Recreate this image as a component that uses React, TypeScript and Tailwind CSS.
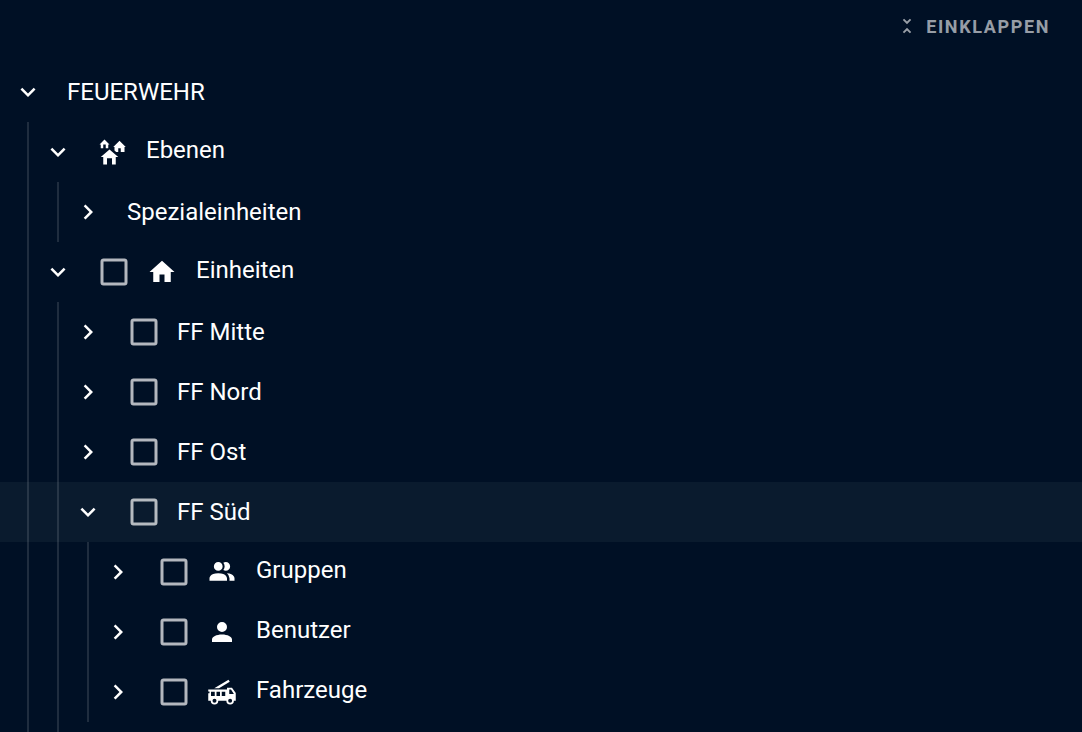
import { useState } from "react";

type IconName = "homeGroup" | "home" | "accounts" | "account" | "fireTruck";

type TreeNode = {
  id: string;
  label: string;
  icon?: IconName;
  selectable?: boolean;
  children?: TreeNode[];
};

const paths: Record<IconName, string> = {
  homeGroup:
    "M17,16H15V22H12V17H8V22H5V16H3L10,10L17,16M6,2L10,6H9V9H7V6H5V9H3V6H2L6,2M18,3L23,8H22V12H19V9H17V12H15.34L14,10.87V8H13L18,3Z",
  home: "M10,20V14H14V20H19V12H22L12,3L2,12H5V20H10Z",
  accounts:
    "M16 17V19H2V17S2 13 9 13 16 17 16 17M12.5 7.5A3.5 3.5 0 1 0 9 11A3.5 3.5 0 0 0 12.5 7.5M15.94 13A5.32 5.32 0 0 1 18 17V19H22V17S22 13.37 15.94 13M15 4A3.39 3.39 0 0 0 13.07 4.59A5 5 0 0 1 13.07 10.41A3.39 3.39 0 0 0 15 11A3.5 3.5 0 0 0 15 4Z",
  account:
    "M12,4A4,4 0 0,1 16,8A4,4 0 0,1 12,12A4,4 0 0,1 8,8A4,4 0 0,1 12,4M12,14C16.42,14 20,15.79 20,18V20H4V18C4,15.79 7.58,14 12,14Z",
  fireTruck:
    "M5.8 9L17.2 2.1L18.2 3.8L9.6 9ZM1 10H16V8.5H20L23 12.7V19H21.5A3 3 0 0 1 15.5 19H9A3 3 0 0 1 3 19H1V13H2V11.5H1ZM3.2 11.7V15.1H6.2V11.7ZM7.6 11.7V15.1H10.4V11.7ZM11.8 11.7V15.1H14.6V11.7ZM17.8 9.9V13.5H21.5L19.2 9.9ZM6 17.4A1.6 1.6 0 1 0 6 20.6A1.6 1.6 0 1 0 6 17.4ZM18.5 17.4A1.6 1.6 0 1 0 18.5 20.6A1.6 1.6 0 1 0 18.5 17.4Z",
};

const tree: TreeNode[] = [
  {
    id: "feuerwehr",
    label: "FEUERWEHR",
    children: [
      {
        id: "ebenen",
        label: "Ebenen",
        icon: "homeGroup",
        children: [{ id: "spezial", label: "Spezialeinheiten", children: [] }],
      },
      {
        id: "einheiten",
        label: "Einheiten",
        icon: "home",
        selectable: true,
        children: [
          { id: "mitte", label: "FF Mitte", selectable: true, children: [] },
          { id: "nord", label: "FF Nord", selectable: true, children: [] },
          { id: "ost", label: "FF Ost", selectable: true, children: [] },
          {
            id: "sued",
            label: "FF Süd",
            selectable: true,
            children: [
              { id: "gruppen", label: "Gruppen", icon: "accounts", selectable: true, children: [] },
              { id: "benutzer", label: "Benutzer", icon: "account", selectable: true, children: [] },
              { id: "fahrzeuge", label: "Fahrzeuge", icon: "fireTruck", selectable: true, children: [] },
            ],
          },
        ],
      },
    ],
  },
];

function Guides({ count }: { count: number }) {
  return (
    <>
      {Array.from({ length: count }, (_, i) => (
        <span key={i} className="flex w-[30px] shrink-0 justify-center self-stretch">
          <span className="w-0.5 bg-white/12" />
        </span>
      ))}
    </>
  );
}

function Checkbox({ id }: { id: string }) {
  return (
    <span className="ml-[23px] grid size-9 shrink-0 text-white/70">
      <input
        id={id}
        type="checkbox"
        className="peer col-start-1 row-start-1 size-9 cursor-pointer appearance-none"
      />
      <svg
        viewBox="0 0 24 24"
        fill="currentColor"
        className="pointer-events-none col-start-1 row-start-1 size-9 peer-checked:hidden"
      >
        <path d="M19,3H5C3.89,3 3,3.89 3,5V19A2,2 0 0,0 5,21H19A2,2 0 0,0 21,19V5C21,3.89 20.1,3 19,3M19,5V19H5V5H19Z" />
      </svg>
      <svg
        viewBox="0 0 24 24"
        fill="currentColor"
        className="pointer-events-none col-start-1 row-start-1 hidden size-9 peer-checked:block"
      >
        <path d="M10,17L5,12L6.41,10.58L10,14.17L17.59,6.58L19,8M19,3H5C3.89,3 3,3.89 3,5V19A2,2 0 0,0 5,21H19A2,2 0 0,0 21,19V5C21,3.89 20.1,3 19,3Z" />
      </svg>
    </span>
  );
}

type RowProps = {
  node: TreeNode;
  depth: number;
  open: Set<string>;
  active: string;
  onToggle: (id: string) => void;
};

function Row({ node, depth, open, active, onToggle }: RowProps) {
  const expanded = open.has(node.id);
  const labelSpacing = node.icon ? "ml-[19px] pb-1" : node.selectable ? "ml-[15px]" : "ml-6";
  return (
    <li>
      <div
        className={`flex h-[60px] items-center pl-[13px] ${active === node.id ? "bg-[#0a1b2e]" : ""}`}
      >
        <Guides count={depth} />
        <button
          type="button"
          aria-expanded={expanded}
          aria-label={node.label}
          onClick={() => onToggle(node.id)}
          className="size-[30px] shrink-0 cursor-pointer"
        >
          <svg viewBox="0 0 24 24" fill="currentColor" className="size-[30px]">
            <path
              d={
                expanded
                  ? "M7.41,8.58L12,13.17L16.59,8.58L18,10L12,16L6,10L7.41,8.58Z"
                  : "M8.59,16.58L13.17,12L8.59,7.41L10,6L16,12L10,18L8.59,16.58Z"
              }
            />
          </svg>
        </button>
        {node.selectable && <Checkbox id={node.id} />}
        {node.icon && (
          <svg
            viewBox="0 0 24 24"
            fill="currentColor"
            fillRule={node.icon === "fireTruck" ? "evenodd" : "nonzero"}
            className={`size-[30px] shrink-0 ${node.selectable ? "ml-[15px]" : "ml-6"}`}
          >
            <path d={paths[node.icon]} />
          </svg>
        )}
        {node.selectable ? (
          <label htmlFor={node.id} className={`truncate text-2xl ${labelSpacing}`}>
            {node.label}
          </label>
        ) : (
          <span className={`truncate text-2xl ${labelSpacing}`}>{node.label}</span>
        )}
      </div>
      {expanded && node.children && node.children.length > 0 && (
        <ul>
          {node.children.map((child) => (
            <Row
              key={child.id}
              node={child}
              depth={depth + 1}
              open={open}
              active={active}
              onToggle={onToggle}
            />
          ))}
        </ul>
      )}
    </li>
  );
}

export default function App() {
  const [open, setOpen] = useState(() => new Set(["feuerwehr", "ebenen", "einheiten", "sued"]));

  const toggle = (id: string) =>
    setOpen((prev) => {
      const next = new Set(prev);
      if (!next.delete(id)) next.add(id);
      return next;
    });

  return (
    <main className="flex h-screen flex-col overflow-hidden bg-[#001025] font-['Roboto',sans-serif] text-white">
      <header className="flex h-[62px] shrink-0 justify-end px-8 pt-3">
        <button
          type="button"
          onClick={() => setOpen(new Set())}
          className="flex h-[30px] cursor-pointer items-center gap-2 text-lg font-bold tracking-[0.09em] text-white/60 uppercase"
        >
          <svg viewBox="0 0 24 24" fill="currentColor" className="mb-0.5 size-[22px]">
            <path d="M16.59,5.41L15.17,4L12,7.17L8.83,4L7.41,5.41L12,10M7.41,18.59L8.83,20L12,16.83L15.17,20L16.58,18.59L12,14L7.41,18.59Z" />
          </svg>
          Einklappen
        </button>
      </header>
      <ul className="shrink-0">
        {tree.map((node) => (
          <Row key={node.id} node={node} depth={0} open={open} active="sued" onToggle={toggle} />
        ))}
      </ul>
      {open.has("einheiten") && open.has("feuerwehr") && (
        <div className="flex flex-1 pl-[13px]">
          <Guides count={2} />
        </div>
      )}
    </main>
  );
}
